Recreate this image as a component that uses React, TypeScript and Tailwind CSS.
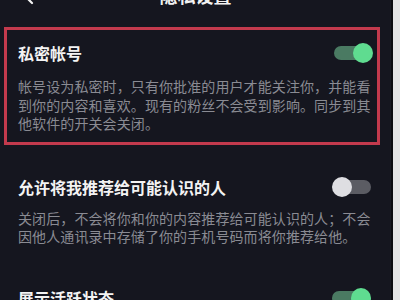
import React from 'react';

const Toggle: React.FC<{ on: boolean }> = ({ on }) => (
  <div className="relative w-[39px] h-[20px] shrink-0">
    <div
      className={
        on
          ? 'absolute left-0 right-[3px] top-[3px] h-[14px] rounded-full bg-[#4a7a62]'
          : 'absolute left-[3px] right-0 top-[3px] h-[14px] rounded-full bg-[#5b5c63]'
      }
    />
    <div
      className={
        on
          ? 'absolute right-0 top-0 w-[20px] h-[20px] rounded-full bg-[#5fdc90]'
          : 'absolute left-0 top-0 w-[20px] h-[20px] rounded-full bg-[#dedee2]'
      }
    />
  </div>
);

export default function App() {
  return (
    <div
      className="flex w-[400px] h-[300px] overflow-hidden bg-[#e2e2e2]"
      style={{ fontFamily: '"Noto Sans CJK SC", "Noto Sans", sans-serif' }}
    >
      <div className="w-[393px] h-full shrink-0 bg-[#15161f] border-r-2 border-[#0a0a0e] flex flex-col">
        {/* header, mostly scrolled off the top */}
        <div className="relative h-[27px] shrink-0">
          <svg className="absolute left-[22px] top-[-14px]" width="12" height="20" viewBox="0 0 12 20" fill="none">
            <path d="M10 1 L2 9 L10 17" stroke="#f2f2f2" strokeWidth="2.2" strokeLinecap="round" strokeLinejoin="round" />
          </svg>
          <div className="absolute left-0 right-0 top-[-14px] text-center text-[18px] leading-[18px] font-bold text-[#f2f2f2]">
            隐私设置
          </div>
        </div>

        {/* private account, boxed in red */}
        <div className="ml-[4px] w-[376px] border-[3px] border-[#c33a4d] pl-[11px] pr-[4px] pt-[12px] pb-[9px]">
          <div className="flex items-center justify-between h-[22px]">
            <span className="text-[16px] font-bold text-[#f3f3f3]">私密帐号</span>
            <Toggle on />
          </div>
          <p className="mt-[13px] w-[356px] text-[14px] leading-[18.5px] tracking-[0.1px] text-[#8a8b93]">
            帐号设为私密时，只有你批准的用户才能关注你，并能看到你的内容和喜欢。现有的粉丝不会受到影响。同步到其他软件的开关会关闭。
          </p>
        </div>

        <div className="mt-[8px] mx-[18px] h-px bg-[#252631]" />

        <div className="pl-[18px] pr-[20px] pt-[23px]">
          <div className="flex items-center justify-between h-[22px]">
            <span className="text-[16px] font-bold text-[#f3f3f3]">允许将我推荐给可能认识的人</span>
            <Toggle on={false} />
          </div>
          <p className="mt-[11px] w-[356px] text-[14px] leading-[18.5px] tracking-[0.1px] text-[#8a8b93]">
            关闭后，不会将你和你的内容推荐给可能认识的人；不会因他人通讯录中存储了你的手机号码而将你推荐给他。
          </p>
        </div>

        <div className="mt-[22px] mx-[18px] h-px bg-[#252631]" />

        <div className="pl-[18px] pr-[20px] pt-[19px]">
          <div className="flex items-center justify-between h-[22px]">
            <span className="text-[16px] font-bold text-[#f3f3f3]">展示活跃状态</span>
            <Toggle on />
          </div>
        </div>
      </div>
    </div>
  );
}
